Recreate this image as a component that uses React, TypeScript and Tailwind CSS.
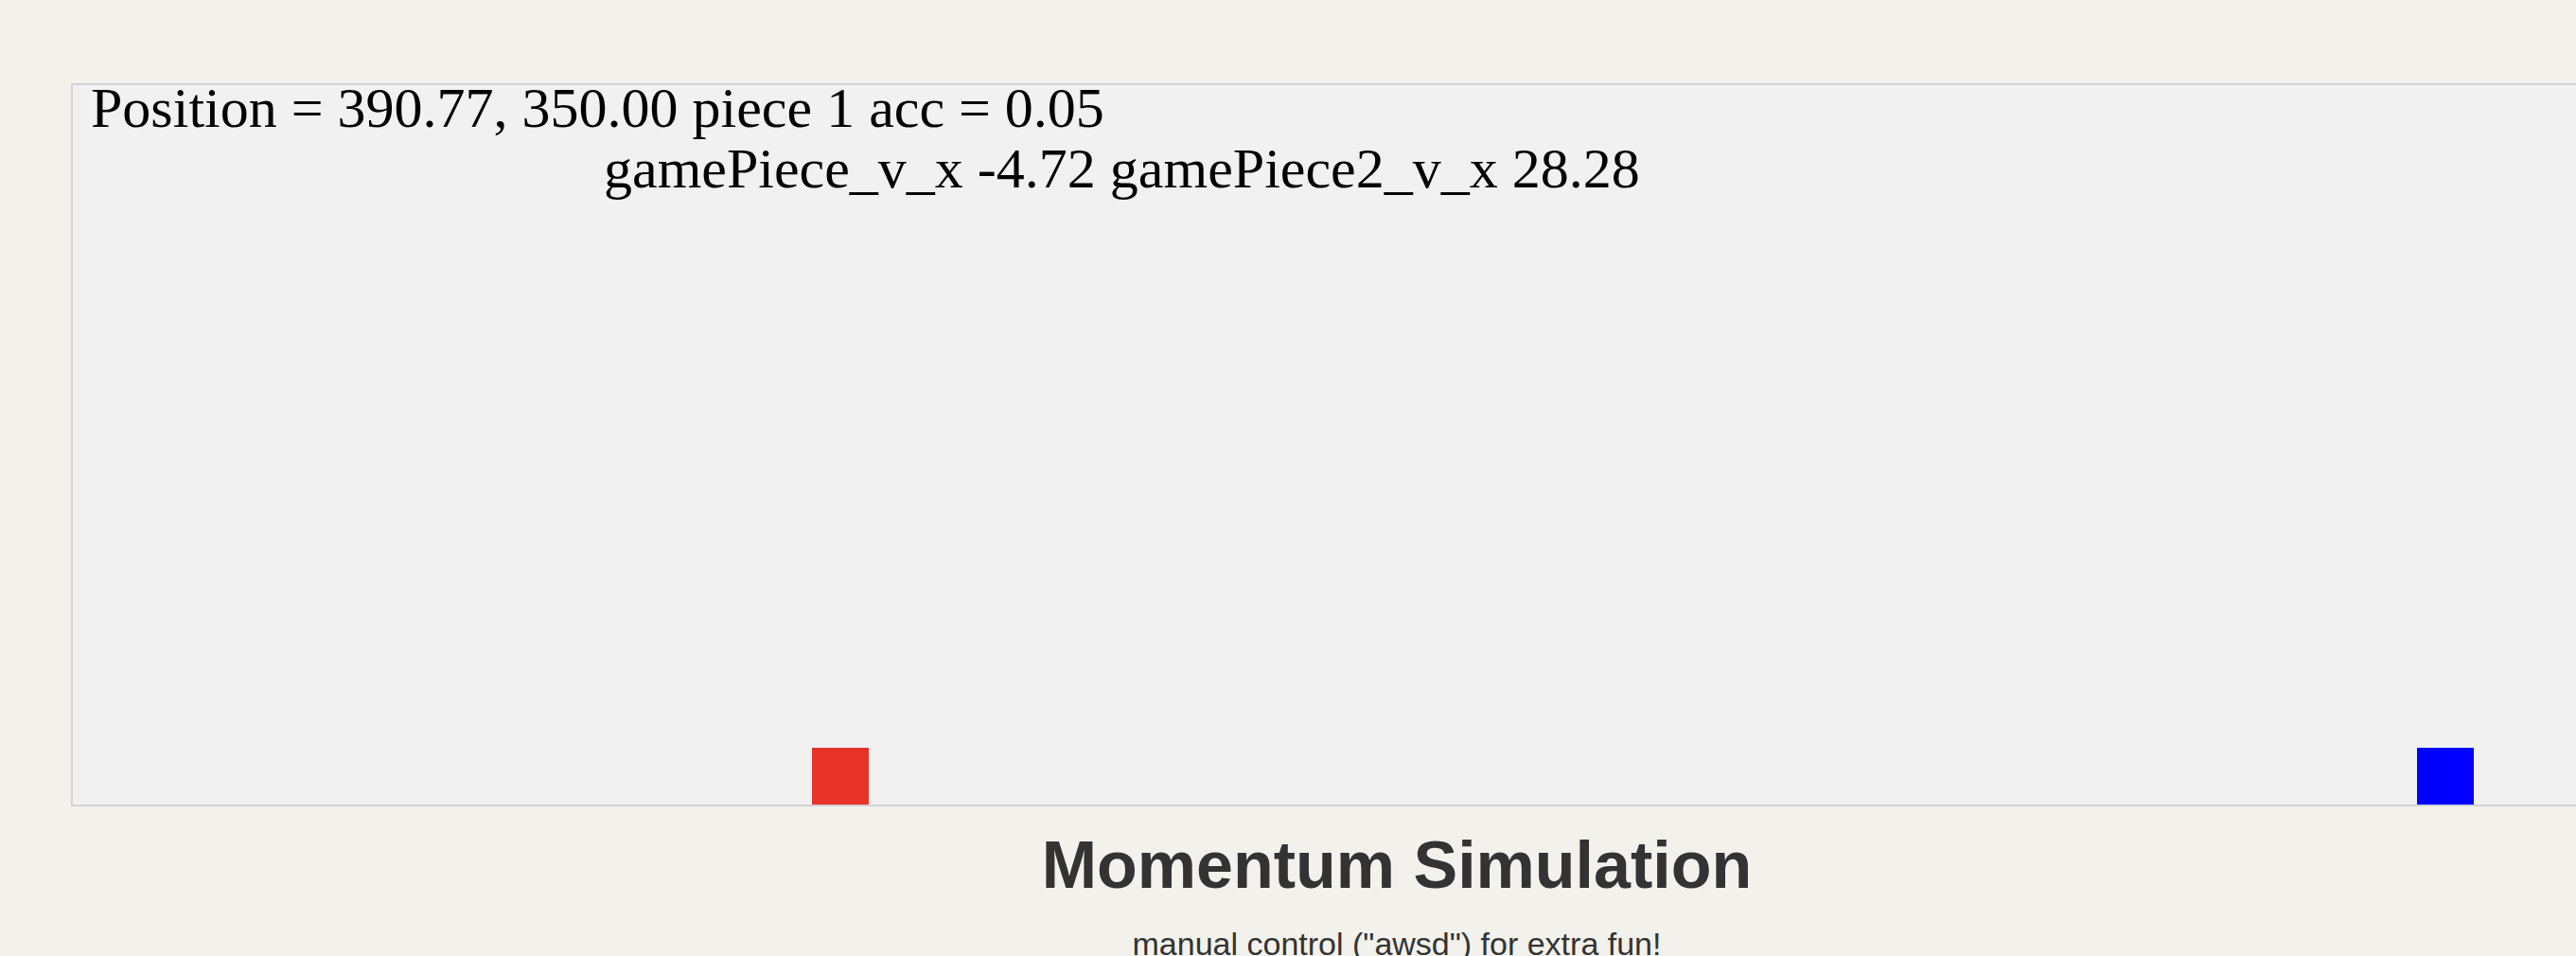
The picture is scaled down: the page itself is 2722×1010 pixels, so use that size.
import React from "react";

const pieces = [
  { id: 1, left: 781, color: "bg-[#e8332a]" },
  { id: 2, left: 2477, color: "bg-[#0000ff]" },
];

export default function App() {
  return (
    <div className="min-h-screen w-full overflow-hidden bg-[#f2f1ec]">
      <div className="w-[2877px] pl-[75px] pt-[88px]">
        {/* simulation area */}
        <div className="relative h-[764px] w-[2802px] border-2 border-[#d3d3d3] bg-[#f1f1f1]">
          <div className="pl-[19px] pt-[2px] font-['Liberation_Serif',serif] text-[60px] text-black">
            <div className="leading-[44px] whitespace-nowrap">
              Position = 390.77, 350.00 piece 1 acc = 0.05
            </div>
            <div className="mt-[20px] pl-[542px] leading-[44px] whitespace-nowrap">
              gamePiece_v_x -4.72 gamePiece2_v_x 28.28
            </div>
          </div>
          {pieces.map((p) => (
            <div
              key={p.id}
              className={`absolute bottom-0 h-[60px] w-[60px] ${p.color}`}
              style={{ left: p.left }}
            />
          ))}
        </div>

        <h1 className="mt-[27px] text-center font-['Liberation_Sans',Arial,sans-serif] text-[70px] font-bold leading-[70px] text-[#333]">
          Momentum Simulation
        </h1>
        <p className="mt-[31px] text-center font-['Liberation_Sans',Arial,sans-serif] text-[34px] leading-[34px] text-[#333]">
          manual control ("awsd") for extra fun!
        </p>
      </div>
    </div>
  );
}
